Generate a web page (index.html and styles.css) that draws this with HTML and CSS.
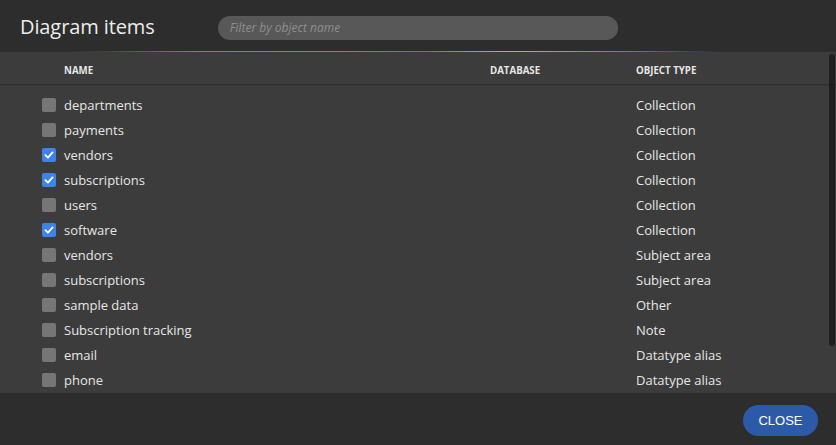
FILE: index.html
```html
<!DOCTYPE html>
<html>
<head>
<meta charset="utf-8">
<link rel="stylesheet" href="styles.css">
</head>
<body>
<div class="dialog">
  <div class="header">
    <h1 class="title">Diagram items</h1>
    <div class="search">Filter by object name</div>
  </div>
  <div class="rule"></div>
  <div class="body">
    <div class="cols head">
      <span></span><span>Name</span><span>Database</span><span>Object type</span>
    </div>
    <div class="rows">
      <div class="cols row"><span class="cb"></span><span>departments</span><span></span><span>Collection</span></div>
      <div class="cols row"><span class="cb"></span><span>payments</span><span></span><span>Collection</span></div>
      <div class="cols row"><span class="cb on"><svg viewBox="0 0 14 14"><path d="M3.4 7.2 L5.9 9.6 L10.6 4.4"/></svg></span><span>vendors</span><span></span><span>Collection</span></div>
      <div class="cols row"><span class="cb on"><svg viewBox="0 0 14 14"><path d="M3.4 7.2 L5.9 9.6 L10.6 4.4"/></svg></span><span>subscriptions</span><span></span><span>Collection</span></div>
      <div class="cols row"><span class="cb"></span><span>users</span><span></span><span>Collection</span></div>
      <div class="cols row"><span class="cb on"><svg viewBox="0 0 14 14"><path d="M3.4 7.2 L5.9 9.6 L10.6 4.4"/></svg></span><span>software</span><span></span><span>Collection</span></div>
      <div class="cols row"><span class="cb"></span><span>vendors</span><span></span><span>Subject area</span></div>
      <div class="cols row"><span class="cb"></span><span>subscriptions</span><span></span><span>Subject area</span></div>
      <div class="cols row"><span class="cb"></span><span>sample data</span><span></span><span>Other</span></div>
      <div class="cols row"><span class="cb"></span><span>Subscription tracking</span><span></span><span>Note</span></div>
      <div class="cols row"><span class="cb"></span><span>email</span><span></span><span>Datatype alias</span></div>
      <div class="cols row"><span class="cb"></span><span>phone</span><span></span><span>Datatype alias</span></div>
    </div>
    <div class="scrollbar"></div>
  </div>
  <div class="footer">
    <button class="close">CLOSE</button>
  </div>
</div>
</body>
</html>
```
FILE: styles.css
```css
html, body {
  margin: 0;
  padding: 0;
  background: #2d2d2d;
}
body {
  font-family: "Open Sans", "Noto Sans", sans-serif;
  color: #e4e4e4;
}
.dialog {
  width: 836px;
  height: 445px;
  display: flex;
  flex-direction: column;
  overflow: hidden;
}
.header {
  height: 51px;
  flex: none;
  display: flex;
  align-items: center;
  padding-left: 20px;
  background: #2d2d2d;
}
.title {
  margin: 2px 0 0 0;
  font-size: 20px;
  font-weight: 400;
  color: #ececec;
  line-height: 24px;
  letter-spacing: -0.1px;
}
.search {
  margin-left: 63px;
  width: 388px;
  height: 24px;
  border-radius: 12px;
  background: #585858;
  padding-left: 12px;
  font-size: 12px;
  font-style: italic;
  color: #8e8e8e;
  line-height: 24px;
  margin-top: 5px;
}
.rule {
  height: 1px;
  flex: none;
  background: linear-gradient(90deg, rgba(0,0,0,0) 70px, #5a9e4a 200px, #b86a7e 340px, #d44a3a 420px, #e08a30 480px, #d8aa40 510px, #8a94a8 570px, #4a7ed0 630px, rgba(74,126,208,0) 720px);
}
.body {
  flex: 1;
  position: relative;
  background: #3c3c3c;
  overflow: hidden;
}
.cols {
  display: grid;
  grid-template-columns: 22px 426px 146px 1fr;
  padding-left: 42px;
  align-items: center;
}
.head {
  height: 32px;
  font-size: 9.7px;
  font-weight: 700;
  text-transform: uppercase;
  color: #e6e6e6;
  box-shadow: 0 1px 1px rgba(0,0,0,0.22);
  padding-top: 4px;
  box-sizing: border-box;
}
.rows {
  padding-top: 8px;
}
.row {
  height: 25px;
  font-size: 13px;
  color: #e6e6e6;
}
.cb {
  width: 14px;
  height: 14px;
  border-radius: 2px;
  background: #767676;
  display: block;
}
.cb.on {
  background: #3f83ea;
}
.cb svg {
  width: 14px;
  height: 14px;
  display: block;
  fill: none;
  stroke: #ffffff;
  stroke-width: 1.8;
  stroke-linecap: round;
  stroke-linejoin: round;
}
.scrollbar {
  position: absolute;
  right: 1px;
  top: 2px;
  width: 6px;
  height: 292px;
  border-radius: 3px;
  background: #1f1f1f;
}
.footer {
  height: 52px;
  flex: none;
  display: flex;
  justify-content: flex-end;
  align-items: center;
  padding-right: 18px;
  background: #2d2d2d;
}
.close {
  width: 75px;
  height: 31px;
  border: none;
  border-radius: 16px;
  background: #2c5aa8;
  color: #ffffff;
  font-family: "Liberation Sans", Arial, sans-serif;
  font-size: 13px;
  padding: 0;
  margin-top: 3px;
}
```
